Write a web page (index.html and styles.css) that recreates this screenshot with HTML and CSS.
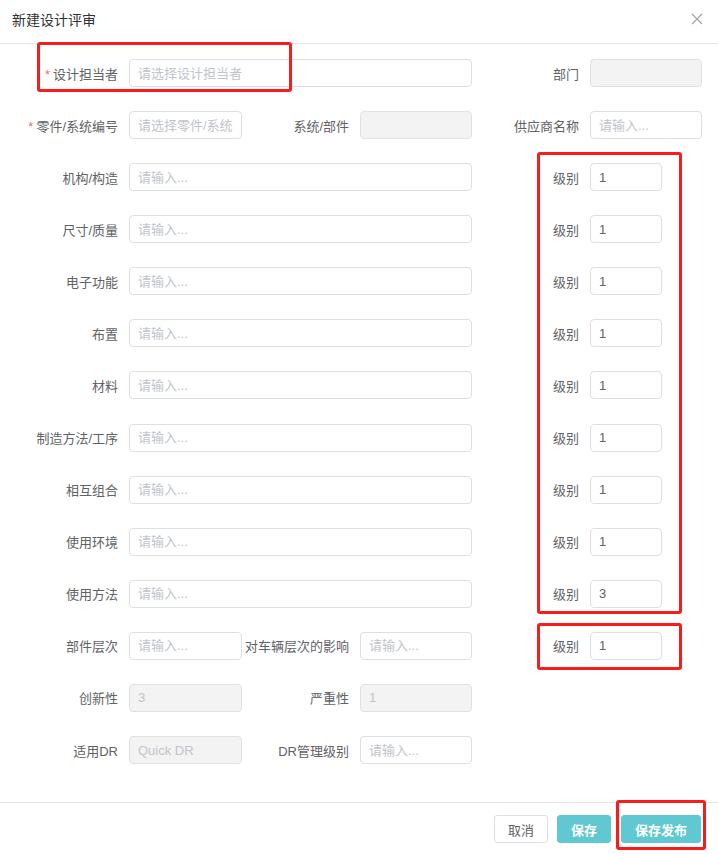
FILE: index.html
```html
<!DOCTYPE html>
<html lang="zh-CN">
<head>
<meta charset="utf-8">
<title>新建设计评审</title>
<link rel="stylesheet" href="styles.css">
</head>
<body>
<div class="dialog">
  <header class="dlg-header">
    <span class="dlg-title">新建设计评审</span>
    <button class="close" aria-label="关闭">
      <svg width="12" height="12" viewBox="0 0 12 12"><path d="M1 1L11 11M11 1L1 11" stroke="#a0a3a8" stroke-width="1.2" fill="none"/></svg>
    </button>
  </header>

  <main class="dlg-body">
    <div class="form">
      <div class="field span2"><label class="lbl"><i class="req">*</i>设计担当者</label><input class="ipt" placeholder="请选择设计担当者"></div>
      <div class="field"><label class="lbl">部门</label><input class="ipt" disabled></div>

      <div class="field"><label class="lbl"><i class="req">*</i>零件/系统编号</label><input class="ipt" placeholder="请选择零件/系统编号"></div>
      <div class="field"><label class="lbl">系统/部件</label><input class="ipt" disabled></div>
      <div class="field"><label class="lbl">供应商名称</label><input class="ipt" placeholder="请输入..."></div>

      <div class="field span2"><label class="lbl">机构/构造</label><input class="ipt" placeholder="请输入..."></div>
      <div class="field"><label class="lbl">级别</label><input class="ipt lvl" value="1"></div>

      <div class="field span2"><label class="lbl">尺寸/质量</label><input class="ipt" placeholder="请输入..."></div>
      <div class="field"><label class="lbl">级别</label><input class="ipt lvl" value="1"></div>

      <div class="field span2"><label class="lbl">电子功能</label><input class="ipt" placeholder="请输入..."></div>
      <div class="field"><label class="lbl">级别</label><input class="ipt lvl" value="1"></div>

      <div class="field span2"><label class="lbl">布置</label><input class="ipt" placeholder="请输入..."></div>
      <div class="field"><label class="lbl">级别</label><input class="ipt lvl" value="1"></div>

      <div class="field span2"><label class="lbl">材料</label><input class="ipt" placeholder="请输入..."></div>
      <div class="field"><label class="lbl">级别</label><input class="ipt lvl" value="1"></div>

      <div class="field span2"><label class="lbl">制造方法/工序</label><input class="ipt" placeholder="请输入..."></div>
      <div class="field"><label class="lbl">级别</label><input class="ipt lvl" value="1"></div>

      <div class="field span2"><label class="lbl">相互组合</label><input class="ipt" placeholder="请输入..."></div>
      <div class="field"><label class="lbl">级别</label><input class="ipt lvl" value="1"></div>

      <div class="field span2"><label class="lbl">使用环境</label><input class="ipt" placeholder="请输入..."></div>
      <div class="field"><label class="lbl">级别</label><input class="ipt lvl" value="1"></div>

      <div class="field span2"><label class="lbl">使用方法</label><input class="ipt" placeholder="请输入..."></div>
      <div class="field"><label class="lbl">级别</label><input class="ipt lvl" value="3"></div>

      <div class="field"><label class="lbl">部件层次</label><input class="ipt" placeholder="请输入..."></div>
      <div class="field"><label class="lbl">对车辆层次的影响</label><input class="ipt" placeholder="请输入..."></div>
      <div class="field"><label class="lbl">级别</label><input class="ipt lvl" value="1"></div>

      <div class="field"><label class="lbl">创新性</label><input class="ipt" disabled value="3"></div>
      <div class="field"><label class="lbl">严重性</label><input class="ipt" disabled value="1"></div>
      <div class="field empty"></div>

      <div class="field"><label class="lbl">适用DR</label><input class="ipt" disabled value="Quick DR"></div>
      <div class="field"><label class="lbl">DR管理级别</label><input class="ipt" placeholder="请输入..."></div>
    </div>
  </main>

  <footer class="dlg-footer">
    <button class="btn">取消</button>
    <button class="btn primary">保存</button>
    <button class="btn primary wide">保存发布</button>
  </footer>

  <div class="mark m1"></div>
  <div class="mark m2"></div>
  <div class="mark m3"></div>
  <div class="mark m4"></div>
</div>
</body>
</html>
```

FILE: styles.css
```css
* { box-sizing: border-box; }
html, body { margin: 0; padding: 0; background: #fff; }
body {
  font-family: "Liberation Sans", "Noto Sans CJK SC", sans-serif;
  color: #606266;
  font-size: 13px;
}
.dialog {
  position: relative;
  width: 718px;
  height: 854px;
  display: flex;
  flex-direction: column;
}
.dlg-header {
  height: 44px;
  border-bottom: 1px solid #e6e6e6;
  display: flex;
  align-items: center;
  justify-content: space-between;
  padding: 0 15px 6px 12px;
}
.dlg-title {
  font-size: 14px;
  color: #303133;
}
.close {
  border: 0;
  background: none;
  padding: 0;
  width: 12px;
  height: 12px;
  display: flex;
}
.dlg-body {
  flex: 1;
  padding: 15px 0 0 11px;
}
.form {
  display: grid;
  grid-template-columns: 231px 230px 230px;
  row-gap: 24.08px;
}
.field {
  display: flex;
  align-items: center;
  height: 28px;
}
.span2 { grid-column: span 2; }
.lbl {
  width: 118px;
  flex: none;
  text-align: right;
  padding-right: 11px;
  color: #606266;
  font-size: 13px;
  white-space: nowrap;
}
.req {
  font-style: normal;
  color: #f56c6c;
  margin-right: 3px;
}
.ipt {
  flex: 1;
  min-width: 0;
  height: 28px;
  border: 1px solid #dcdfe6;
  border-radius: 4px;
  padding: 0 8px;
  font-family: "Liberation Sans", "Noto Sans CJK SC", sans-serif;
  font-size: 13px;
  color: #606266;
  background: #fff;
  outline: none;
}
.ipt::placeholder { color: #c0c4cc; }
.ipt:disabled {
  background: #f3f3f3;
  border-color: #e1e1e1;
  color: #c0c4cc;
  -webkit-text-fill-color: #c0c4cc;
  opacity: 1;
}
.lvl { flex: none; width: 72px; }
.dlg-footer {
  height: 52px;
  border-top: 1px solid #e6e6e6;
  display: flex;
  justify-content: flex-end;
  align-items: flex-start;
  gap: 9px;
  padding: 12px 17px 0 0;
}
.btn {
  height: 28px;
  width: 54px;
  border: 1px solid #dcdfe6;
  border-radius: 3px;
  background: #fff;
  color: #606266;
  font-family: "Liberation Sans", "Noto Sans CJK SC", sans-serif;
  font-size: 13px;
  padding: 0;
}
.btn.primary {
  background: #60c8d0;
  border-color: #60c8d0;
  color: #fff;
  font-weight: bold;
}
.btn.wide { width: 80px; margin-left: 1px; }
.mark {
  position: absolute;
  border: 3px solid #fa1c1c;
  border-radius: 3px;
  pointer-events: none;
}
.m1 { left: 37px; top: 42px; width: 255px; height: 50px; }
.m2 { left: 537px; top: 152px; width: 145px; height: 462px; }
.m3 { left: 537px; top: 623px; width: 145px; height: 47px; }
.m4 { left: 616px; top: 800px; width: 90px; height: 50px; }
```
